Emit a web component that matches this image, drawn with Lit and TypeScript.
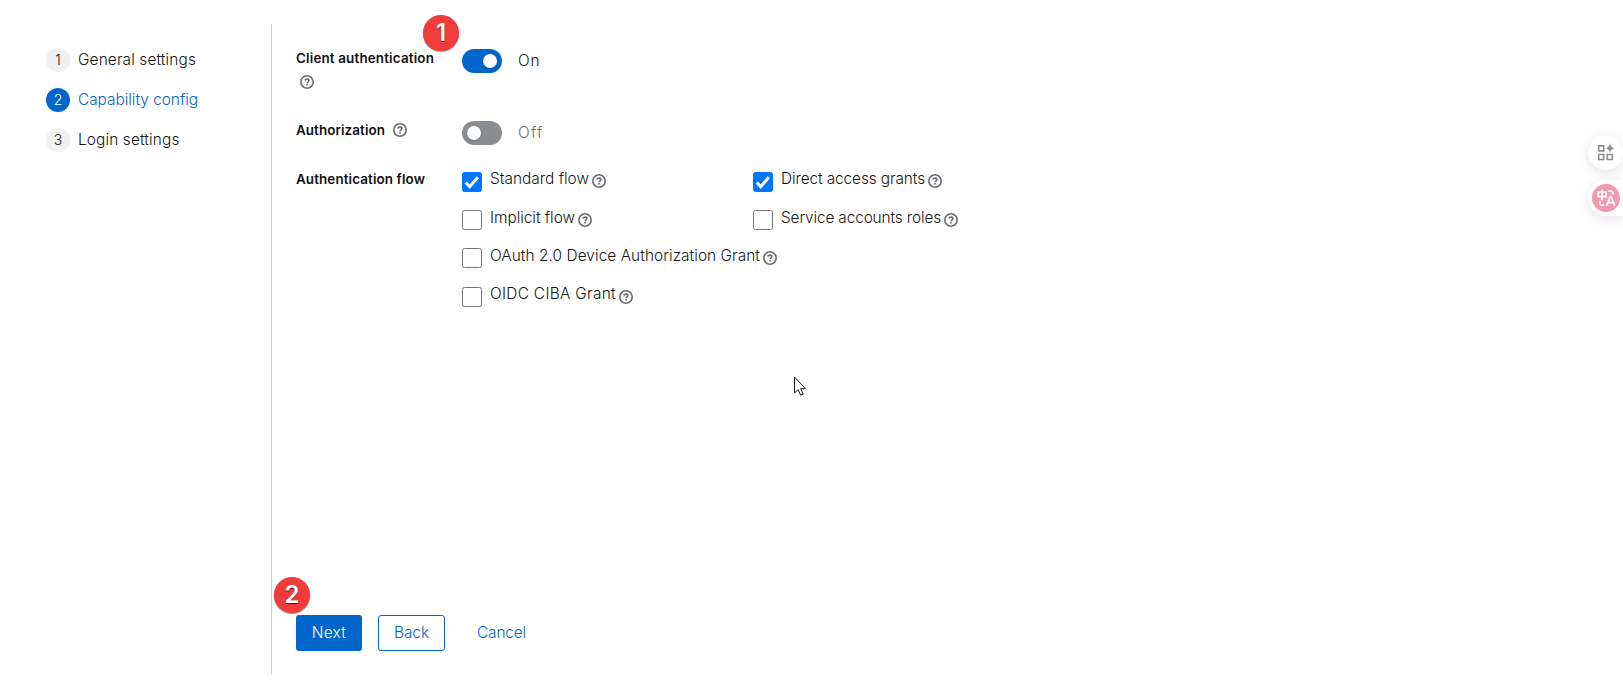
import { LitElement, html, css } from "lit";
import { customElement, property, query } from "lit/decorators.js";

/** One line of text whose tracking is adjusted so that it spans `width` pixels. */
@customElement("tracked-text")
class TrackedText extends LitElement {
  static styles = css`
    :host { display: inline-block; white-space: nowrap; }
    .text { display: inline-block; }
  `;
  @property() text = "";
  @property({ type: Number }) width = 0;
  @query(".text") line!: HTMLElement;

  updated() {
    this.line.style.letterSpacing = "0px";
    const natural = this.line.getBoundingClientRect().width;
    this.line.style.letterSpacing = `${(this.width - natural) / this.text.length}px`;
  }
  render() {
    return html`<span class="text">${this.text}</span>`;
  }
}

@customElement("help-icon")
class HelpIcon extends LitElement {
  static styles = css`
    :host { display: block; width: 14px; height: 14px; color: #6a6e73; flex: none; }
    svg { display: block; }
  `;
  render() {
    return html`<svg width="14" height="14" viewBox="0 0 14 14" fill="none" stroke="currentColor">
      <circle cx="7" cy="7" r="6.2" stroke-width="1.6" />
      <path d="M5 5.65C5.1 4.6 5.9 4.1 7 4.1c1.1 0 1.9.6 1.9 1.5C8.9 6.8 7.2 6.8 7.1 8.2" stroke-width="1.6" />
      <path d="M6.2 9.8h1.7" stroke-width="1.6" />
    </svg>`;
  }
}

@customElement("toggle-switch")
class ToggleSwitch extends LitElement {
  static styles = css`
    :host { display: flex; align-items: center; gap: 16px; height: 24px; }
    .track { box-sizing: border-box; width: 40px; height: 24px; border-radius: 12px; background: #8a8d90; padding: 5px; display: flex; }
    .knob { width: 14px; height: 14px; border-radius: 50%; background: #fff; box-shadow: 0 1px 2px rgba(3, 3, 3, 0.2); }
    .track.on { background: #06c; justify-content: flex-end; }
    .label { color: #6a6e73; }
    .label.on { color: #151515; }
  `;
  @property({ type: Boolean }) on = false;
  render() {
    const state = this.on ? "on" : "";
    return html`<span class="track ${state}"><span class="knob"></span></span>
      <tracked-text class="label ${state}" text=${this.on ? "On" : "Off"} .width=${this.on ? 22.5 : 25.5}></tracked-text>`;
  }
}

@customElement("flow-option")
class FlowOption extends LitElement {
  static styles = css`
    :host { display: flex; align-items: flex-start; height: 20px; }
    .box { box-sizing: border-box; width: 20px; height: 20px; border: 1px solid #767676; border-radius: 2.5px; background: #fff; margin-right: 8px; flex: none; }
    .box.checked { background: #0075ff; border-color: #0075ff; }
    .box svg { display: block; margin: -1px; }
    .label { line-height: 24px; margin-top: -5px; }
    help-icon { margin: 2px 0 0 3px; }
    :host([mid]) .label { margin-top: -4px; }
    :host([mid]) help-icon { margin-top: 3px; }
    :host([high]) .label { margin-top: -5px; }
  `;
  @property() label = "";
  @property({ type: Number }) span = 0;
  @property({ type: Boolean }) checked = false;
  render() {
    return html`<span class="box ${this.checked ? "checked" : ""}">${this.checked
        ? html`<svg width="20" height="20" viewBox="0 0 20 20"><path d="M3.8 10.6l3.9 4.2 8.1-9.6" fill="none" stroke="#fff" stroke-width="3" /></svg>`
        : ""}</span>
      <tracked-text class="label" .text=${this.label} .width=${this.span}></tracked-text>
      <help-icon></help-icon>`;
  }
}

@customElement("app-root")
class AppRoot extends LitElement {
  static styles = css`
    :host {
      display: block; position: relative; box-sizing: border-box; width: 100%; height: 697px; overflow: hidden;
      background: #fff; color: #151515; font: 15.4px/24px Inter, sans-serif; font-weight: 350;
    }
    .wizard { display: flex; padding-top: 24px; height: 651px; }
    nav { box-sizing: border-box; width: 271px; padding: 24px 0 0 46px; display: flex; flex-direction: column; gap: 16px; }
    .step { display: flex; gap: 8px; height: 24px; }
    .num { width: 24px; height: 24px; border-radius: 50%; background: #f0f0f0; text-align: center; font-size: 14px; line-height: 24px; }
    .current { color: #06c; }
    .current .num { background: #06c; color: #fff; }
    main { border-left: 1px solid #d2d2d2; flex: 1; padding: 25px 0 24px 24px; box-sizing: border-box; display: flex; flex-direction: column; }
    .group { display: grid; grid-template-columns: 150px auto; column-gap: 16px; justify-content: start; }
    .client { height: 72px; }
    .authz { height: 48px; }
    .name { font-size: 13.4px; font-weight: 600; line-height: 21px; color: #111; display: flex; flex-wrap: wrap; align-content: flex-start; column-gap: 8px; margin-top: -1px; }
    .client .name help-icon { margin: 6px 0 0 4px; }
    .authz .name help-icon { margin-top: 3px; }
    .flow .name { margin-top: 0; }
    .options { display: grid; grid-template-columns: 291px auto; row-gap: 18px; padding-top: 3px; }
    .wide { grid-column: 1 / -1; }
    .last { margin-top: 1px; }
    footer { margin-top: auto; display: flex; gap: 16px; }
    .btn { box-sizing: border-box; height: 36px; border-radius: 3px; border: 1px solid transparent; padding: 5px 15px; color: #06c; display: flex; justify-content: center; }
    .primary { background: #06c; color: #fff; width: 66px; }
    .secondary { border-color: #06c; width: 67px; }
    .link { width: 81px; }
    .marker { position: absolute; width: 36px; height: 36px; border-radius: 50%; background: #f23b3b; color: #fff; text-align: center; font: 600 24px/36px Inter, sans-serif; text-shadow: 0 1px 1px rgba(0, 0, 0, 0.65); box-shadow: 0 1px 1px rgba(70, 70, 70, 0.6); }
    .first { left: 423px; top: 15px; }
    .second { left: 274px; top: 577px; }
    .cursor { position: absolute; left: 793px; top: 375px; }
    .tools { position: absolute; left: 1588px; top: 135px; width: 35px; display: flex; flex-direction: column; gap: 10px; }
    .tool { height: 35px; width: 35px; border-radius: 50%; background: #fff; box-shadow: 0 3px 12px rgba(0, 0, 0, 0.11); }
    .tab { height: 36px; border-radius: 18px 0 0 18px; }
    svg { display: block; }
  `;

  step(n: number, text: string, width: number, current = false) {
    return html`<div class="step ${current ? "current" : ""}">
      <span class="num">${n}</span><tracked-text .text=${text} .width=${width}></tracked-text>
    </div>`;
  }

  render() {
    return html`
      <div class="wizard">
        <nav>
          ${this.step(1, "General settings", 118)}
          ${this.step(2, "Capability config", 120, true)}
          ${this.step(3, "Login settings", 101.5)}
        </nav>
        <main>
          <div class="group client">
            <div class="name"><tracked-text text="Client authentication" .width=${138}></tracked-text><help-icon></help-icon></div>
            <toggle-switch on></toggle-switch>
          </div>
          <div class="group authz">
            <div class="name"><tracked-text text="Authorization" .width=${89}></tracked-text><help-icon></help-icon></div>
            <toggle-switch></toggle-switch>
          </div>
          <div class="group flow">
            <div class="name"><tracked-text text="Authentication flow" .width=${129}></tracked-text></div>
            <div class="options">
              <flow-option label="Standard flow" .span=${99} checked></flow-option>
              <flow-option label="Direct access grants" .span=${144} checked></flow-option>
              <flow-option mid label="Implicit flow" .span=${85}></flow-option>
              <flow-option mid label="Service accounts roles" .span=${160}></flow-option>
              <flow-option mid class="wide" label="OAuth 2.0 Device Authorization Grant" .span=${270}></flow-option>
              <flow-option mid high class="wide last" label="OIDC CIBA Grant" .span=${126}></flow-option>
            </div>
          </div>
          <footer>
            <div class="btn primary"><tracked-text text="Next" .width=${34.5}></tracked-text></div>
            <div class="btn secondary"><tracked-text text="Back" .width=${35}></tracked-text></div>
            <div class="btn link"><tracked-text text="Cancel" .width=${49}></tracked-text></div>
          </footer>
        </main>
      </div>
      <div class="marker first">1</div>
      <div class="marker second">2</div>
      <svg class="cursor" width="14" height="22" viewBox="0 0 14 22">
        <path d="M1.5 2v16l3.7-3.4 2.5 5.6 2.5-1.1-2.5-5.4h4.8z" fill="#fff" stroke="#15151f" stroke-width="1" />
      </svg>
      <div class="tools">
        <div class="tool">
          <svg width="35" height="35" viewBox="0 0 35 35" fill="none" stroke="#8d8d8d" stroke-width="1.6">
            <path d="M10.7 10.9h5v5h-5zM10.7 19.5h5v5h-5zM19.3 19.5h5v5h-5z" />
            <path d="M22 8.5q.7 3.8 4.2 4.7q-3.5.9-4.2 4.7q-.7-3.8-4.2-4.7q3.5-.9 4.2-4.7z" fill="#8d8d8d" stroke="none" />
          </svg>
        </div>
        <div class="tool tab">
          <svg width="35" height="36" viewBox="0 0 35 36" fill="none" stroke="#fff" stroke-width="1.7">
            <circle cx="18" cy="18" r="14" fill="#f39ab3" stroke="none" />
            <path d="M10.3 12h7.6v4.6h-7.6zM14.1 9.8v10.4" />
            <path d="M20.2 11.2h2.6q2.2 0 2.2 2.2v1M11.8 21v2q0 2.2 2.2 2.2h2.2" />
            <path d="M18.6 25.6l3.7-9h.8l3.7 9M20 22.6h5.4" />
          </svg>
        </div>
      </div>
    `;
  }
}
